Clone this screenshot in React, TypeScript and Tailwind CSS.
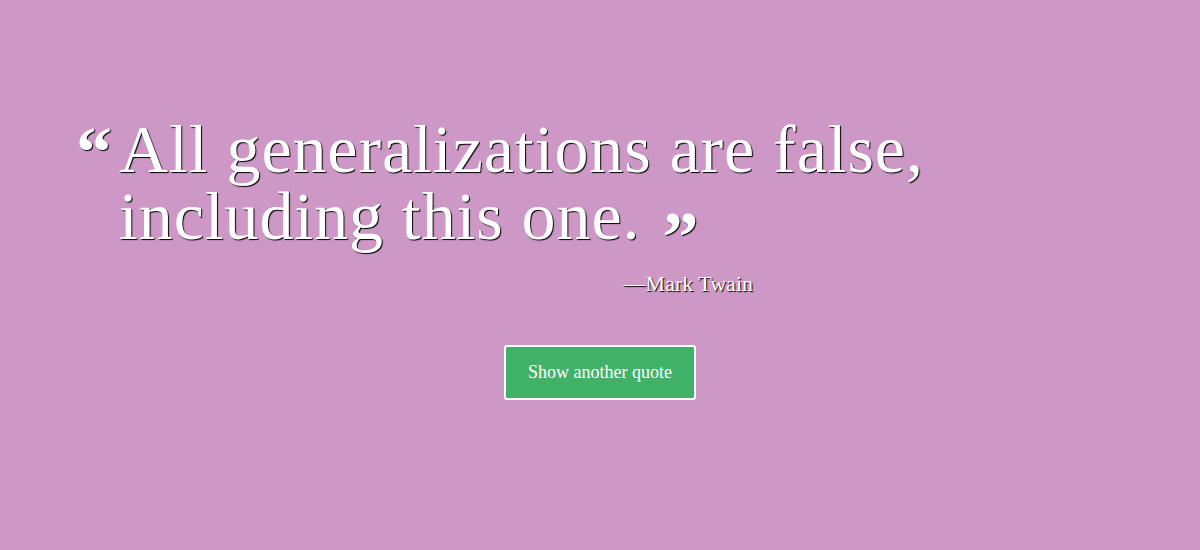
import React from "react";

export default function App() {
  const shadow = "[text-shadow:1px_1px_1px_#000]";
  return (
    <div className="w-[1200px] h-[550px] bg-[#cd98c6] font-['Liberation_Serif',serif] text-white overflow-hidden">
      <div className="pt-[116px] pl-[76px]">
        <div className={`flex items-start ${shadow}`}>
          <span className="text-[72px] leading-[72px] font-bold mr-[7px]">“</span>
          <p className="text-[68px] leading-[67px] tracking-[0.9px]">
            All generalizations are false,
            <br />
            including this one.
            <span className="text-[72px] leading-[0] font-bold ml-[22px] relative top-[22px]">”</span>
          </p>
        </div>
        <div className={`w-[677px] text-right text-[22px] leading-[25px] mt-[21px] ${shadow}`}>—Mark Twain</div>
      </div>
      <div className="flex justify-center mt-[49px]">
        <button className="w-[192px] h-[55px] bg-[#3fb268] border-2 border-white rounded-[3px] text-[18px] text-white">
          Show another quote
        </button>
      </div>
    </div>
  );
}
